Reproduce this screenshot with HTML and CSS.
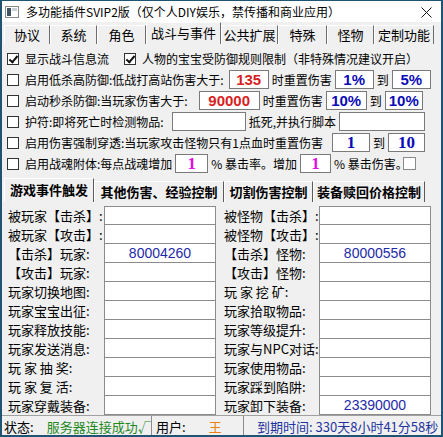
FILE: index.html
```html
<!DOCTYPE html>
<html lang="zh-CN">

<head>
  <meta charset="UTF-8">
  <meta name="viewport" content="width=device-width, initial-scale=1.0">
  <title>多功能插件SVIP2版</title>
  <link rel="stylesheet" href="styles.css">
</head>

<body>
  <div class="window">
    <div class="titlebar">
      <svg class="app-icon" width="14" height="12" viewBox="0 0 14 12">
        <rect x="0.5" y="0.5" width="13" height="11" fill="#fff" stroke="#8a8a8a" />
        <rect x="2" y="2" width="4" height="8" fill="#3f5560" />
        <rect x="7" y="2" width="5" height="3" fill="#c8d0d4" />
      </svg>
      <span class="title">多功能插件SVIP2版（仅个人DIY娱乐，禁传播和商业应用）</span>
      <svg class="close" width="11" height="11" viewBox="0 0 11 11">
        <path d="M0.5 0.5 L10.5 10.5 M10.5 0.5 L0.5 10.5" stroke="#111" stroke-width="1" />
      </svg>
    </div>

    <div class="main-tabs">
      <div class="tab" style="width:46px">协议</div>
      <div class="tab" style="width:47px">系统</div>
      <div class="tab" style="width:49px">角色</div>
      <div class="tab active" style="width:75px">战斗与事件</div>
      <div class="tab" style="width:57px">公共扩展</div>
      <div class="tab" style="width:49px">特殊</div>
      <div class="tab" style="width:47px">怪物</div>
      <div class="tab" style="width:60px">定制功能</div>
    </div>

    <div class="panel">
      <div class="opt">
        <span class="cb checked"></span>显示战斗信息流
        <span class="cb checked gap-cb"></span>人物的宝宝受防御规则限制（非特殊情况建议开启）
      </div>
      <div class="opt">
        <span class="cb"></span>启用低杀高防御:低战打高站伤害大于:
        <input class="field red push-4" style="width:40px" value="135">时重置伤害
        <input class="field blue" style="width:39px" value="1%">到
        <input class="field blue" style="width:39px" value="5%">
      </div>
      <div class="opt">
        <span class="cb"></span>启动秒杀防御:当玩家伤害大于:
        <input class="field red push-8" style="width:61px" value="90000">时重置伤害
        <input class="field blue" style="width:41px" value="10%">到
        <input class="field blue" style="width:38px" value="10%">
      </div>
      <div class="opt">
        <span class="cb"></span>护符:即将死亡时检测物品:
        <input class="field push-5" style="width:74px" value="">抵死,并执行脚本
        <input class="field" style="width:86px" value="">
      </div>
      <div class="opt">
        <span class="cb"></span>启用伤害强制穿透:当玩家攻击怪物只有1点血时重置伤害
        <input class="field blue serif push-6" style="width:38px" value="1">到
        <input class="field blue serif" style="width:37px" value="10">
      </div>
      <div class="opt">
        <span class="cb"></span>启用战魂附体:每点战魂增加
        <input class="field pink serif" style="width:33px" value="1">% 暴击率。增加
        <input class="field pink serif" style="width:31px" value="1">% 暴击伤害。<span class="cb plain"></span>
      </div>

      <div class="sub-tabs">
        <div class="sub-tab active" style="width:90px">游戏事件触发</div>
        <div class="sub-tab" style="width:130px">其他伤害、经验控制</div>
        <div class="sub-tab" style="width:89px">切割伤害控制</div>
        <div class="sub-tab" style="width:112px">装备赎回价格控制</div>
      </div>

      <div class="event-grid">
        <div class="lbl">被玩家【击杀】:</div><div class="val"></div>
        <div class="lbl">被怪物【击杀】:</div><div class="val"></div>

        <div class="lbl">被玩家【攻击】:</div><div class="val"></div>
        <div class="lbl">被怪物【攻击】:</div><div class="val"></div>

        <div class="lbl">【击杀】玩家:</div><div class="val">80004260</div>
        <div class="lbl">【击杀】怪物:</div><div class="val">80000556</div>

        <div class="lbl">【攻击】玩家:</div><div class="val"></div>
        <div class="lbl">【攻击】怪物:</div><div class="val"></div>

        <div class="lbl">玩家切换地图:</div><div class="val"></div>
        <div class="lbl">玩 家 挖 矿:</div><div class="val"></div>

        <div class="lbl">玩家宝宝出征:</div><div class="val"></div>
        <div class="lbl">玩家拾取物品:</div><div class="val"></div>

        <div class="lbl">玩家释放技能:</div><div class="val"></div>
        <div class="lbl">玩家等级提升:</div><div class="val"></div>

        <div class="lbl">玩家发送消息:</div><div class="val"></div>
        <div class="lbl">玩家与NPC对话:</div><div class="val"></div>

        <div class="lbl">玩 家 抽 奖:</div><div class="val"></div>
        <div class="lbl">玩家使用物品:</div><div class="val"></div>

        <div class="lbl">玩 家 复 活:</div><div class="val"></div>
        <div class="lbl">玩家踩到陷阱:</div><div class="val"></div>

        <div class="lbl">玩家穿戴装备:</div><div class="val"></div>
        <div class="lbl">玩家卸下装备:</div><div class="val">23390000</div>
      </div>
    </div>

    <div class="statusbar">
      <div class="st-cell st-state">状态:<span class="ok">服务器连接成功√</span></div>
      <div class="st-cell st-user">用户:<span class="user">王</span></div>
      <div class="st-cell st-expire">到期时间: 330天8小时41分58秒</div>
    </div>
  </div>
</body>

</html>
```

FILE: styles.css
```css
body {
  margin: 0;
  font-family: "Noto Sans CJK SC", sans-serif;
  font-size: 12px;
  color: #000;
  background: #1f5475;
}

.window {
  width: 443px;
  height: 437px;
  box-sizing: border-box;
  border-style: solid;
  border-color: #1f5475;
  border-width: 1px 2px 2px 2px;
  background: #f0f0f0;
  display: flex;
  flex-direction: column;
  overflow: hidden;
}

/* title bar */
.titlebar {
  height: 21px;
  flex-shrink: 0;
  background: #fff;
  display: flex;
  align-items: center;
  padding-left: 3px;
}

.app-icon {
  margin-right: 7px;
  margin-top: 1px;
}

.title {
  font-size: 12px;
  flex: 1;
  white-space: nowrap;
}

.close {
  margin-right: 9px;
  margin-top: 2px;
}

/* top tab strip */
.main-tabs {
  height: 22px;
  flex-shrink: 0;
  display: flex;
  align-items: flex-end;
  padding-left: 2px;
}

.tab {
  height: 19px;
  line-height: 18px;
  box-sizing: border-box;
  text-align: center;
  font-size: 13px;
  border-left: 1px solid #fff;
  border-top: 1px solid #fff;
  border-right: 1px solid #6d6d6d;
  white-space: nowrap;
}

.tab.active {
  height: 22px;
  line-height: 19px;
}

/* options panel */
.panel {
  flex: 1;
  padding-top: 4px;
  display: flex;
  flex-direction: column;
}

.opt {
  height: 21px;
  display: flex;
  align-items: center;
  padding-left: 5px;
  white-space: nowrap;
}

.cb {
  width: 12px;
  height: 12px;
  box-sizing: border-box;
  border: 1px solid #333;
  background: #fff;
  margin-right: 6px;
  flex-shrink: 0;
  position: relative;
}

.cb.checked::after {
  content: "";
  position: absolute;
  left: 3px;
  top: 0px;
  width: 3px;
  height: 7px;
  border: solid #111;
  border-width: 0 2px 2px 0;
  transform: rotate(40deg);
}

.cb.gap-cb {
  margin-left: 15px;
}

.cb.plain {
  border-color: #8a8a8a;
  margin-left: -5px;
  width: 13px;
  height: 13px;
}

.field {
  height: 19px;
  box-sizing: border-box;
  border: 1px solid #7a7a7a;
  background: #fff;
  text-align: center;
  padding: 0;
  margin: 0 3px;
  font-family: "Liberation Sans", sans-serif;
  font-weight: bold;
  font-size: 15px;
  outline: none;
}

.push-4 {
  margin-left: 5px;
}

.push-5 {
  margin-left: 8px;
}

.push-6 {
  margin-left: 9px;
}

.push-8 {
  margin-left: 11px;
}

.field.serif {
  font-family: "Liberation Serif", serif;
  font-size: 17px;
}

.red {
  color: #d81e1e;
}

.blue {
  color: #0b0bb8;
}

.pink {
  color: #e010e0;
}

/* lower tab strip */
.sub-tabs {
  height: 24px;
  margin-top: 4px;
  display: flex;
  align-items: flex-end;
  padding-left: 2px;
}

.sub-tab {
  height: 21px;
  line-height: 20px;
  box-sizing: border-box;
  text-align: center;
  font-size: 13px;
  font-weight: bold;
  border-left: 1px solid #fff;
  border-top: 1px solid #fff;
  border-right: 1px solid #5a5a5a;
  white-space: nowrap;
}

.sub-tab.active {
  height: 24px;
  line-height: 22px;
}

/* event script table */
.event-grid {
  margin-top: 4px;
  padding-left: 2px;
  display: grid;
  grid-template-columns: 100px 112px 103px 112px;
  grid-auto-rows: 19px;
}

.lbl {
  font-size: 13px;
  line-height: 19px;
  padding-left: 4px;
  white-space: nowrap;
}

.event-grid .lbl:nth-child(4n+3) {
  padding-left: 8px;
}

.val {
  box-sizing: border-box;
  background: #fff;
  border: 1px solid #8c8c8c;
  border-top: none;
  text-align: center;
  line-height: 18px;
  color: #1d2aa8;
  font-family: "Liberation Sans", sans-serif;
  font-size: 14px;
}

.event-grid .val:nth-child(-n+4) {
  border-top: 1px solid #8c8c8c;
  line-height: 17px;
}

/* status bar */
.statusbar {
  height: 20px;
  flex-shrink: 0;
  display: flex;
  align-items: center;
  border-top: 1px solid #a0a0a0;
  font-size: 13px;
  white-space: nowrap;
}

.st-cell {
  height: 100%;
  display: flex;
  align-items: center;
  box-sizing: border-box;
  border-right: 1px solid #8c8c8c;
}

.st-state {
  width: 150px;
  padding-left: 2px;
}

.st-user {
  width: 92px;
  padding-left: 4px;
}

.st-expire {
  flex: 1;
  border-right: none;
  padding-left: 13px;
  color: #1f34a0;
}

.ok {
  color: #1e8a1e;
  margin-left: 13px;
}

.user {
  color: #e8820c;
  margin-left: 23px;
}
```
